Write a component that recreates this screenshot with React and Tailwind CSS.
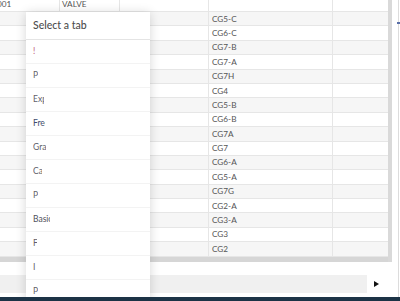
import React from "react";

const cg = ["CG5-C","CG6-C","CG7-B","CG7-A","CG7H","CG4","CG5-B","CG6-B","CG7A","CG7","CG6-A","CG5-A","CG7G","CG2-A","CG3-A","CG3","CG2"];

const items = [
  { t: "!", w: "w-[3px]", c: "text-[#c0607a]" },
  { t: "P", w: "w-[5px]", c: "text-[#5f5f6b]" },
  { t: "Exp", w: "w-[11px]", c: "text-[#5f5f6b]" },
  { t: "Free", w: "w-[12px]", c: "text-[#3f4d6e]" },
  { t: "Grap", w: "w-[13px]", c: "text-[#5f5f6b]" },
  { t: "Cal", w: "w-[9px]", c: "text-[#5f5f6b]" },
  { t: "P", w: "w-[5px]", c: "text-[#5f5f6b]" },
  { t: "Basic", w: "w-[17px]", c: "text-[#4f4f5b]" },
  { t: "F", w: "w-[4px]", c: "text-[#5f5f6b]" },
  { t: "I", w: "w-[3px]", c: "text-[#5f5f6b]" },
  { t: "P", w: "w-[5px]", c: "text-[#5f5f6b]" },
];

function Row({ a, b, c, gray }) {
  return (
    <div className={`flex h-[14.4px] shrink-0 border-b border-[#e6e6e6] text-[8.2px] text-[#555] ${gray ? "bg-[#f6f6f6]" : "bg-white"}`}>
      <div className="w-[60px] border-r border-[#e6e6e6] flex items-center overflow-hidden"><span className="-ml-[3px]">{a}</span></div>
      <div className="w-[60px] border-r border-[#e6e6e6] flex items-center pl-[2px]">{b}</div>
      <div className="w-[89px] border-r border-[#e6e6e6]" />
      <div className="w-[124px] border-r border-[#e6e6e6] flex items-center pl-[3px]">{c}</div>
      <div className="flex-1" />
    </div>
  );
}

export default function App() {
  return (
    <div className="w-[400px] h-[301px] bg-white overflow-hidden font-['Lato',sans-serif]">
      <div className="relative h-[297px] flex overflow-hidden">
        <div className="w-[392px] flex flex-col">
          <div className="flex h-[262px]">
            <div className="w-[388px] flex flex-col">
              <div className="flex-1 overflow-hidden">
                <div className="-mt-[2.4px] flex flex-col">
                  <Row a="001" b="VALVE" c="" gray={false} />
                  {cg.map((v, i) => (
                    <Row key={i} a="" b="" c={v} gray={i % 2 === 0} />
                  ))}
                </div>
              </div>
              <div className="h-[5px] bg-[#d6d6d6]" />
            </div>
            <div className="w-[4px] bg-[#d9d9d9]" />
          </div>
          <div className="h-[13px]" />
          <div className="flex h-[18px]">
            <div className="w-[367px] bg-[#f0f0f0]" />
            <div className="flex-1 flex items-center pl-[7px]">
              <svg width="5" height="6" viewBox="0 0 5 6"><path d="M0 0 L5 3 L0 6 Z" fill="#111" /></svg>
            </div>
          </div>
        </div>
        <div className="flex-1 flex justify-end pr-[1px]">
          <div className="w-[1px] bg-[#dcdcdc] relative">
            <div className="absolute top-[22px] -left-[1px] w-[3px] h-[2px] bg-[#5a6fa8]" />
          </div>
        </div>

        <div className="absolute left-[26px] top-[12px] w-[124px] h-[300px] bg-white shadow-[0_1px_10px_rgba(0,0,0,0.16)] flex flex-col">
          <div className="h-[28px] shrink-0 border-b border-[#e4e4e4] flex items-center pl-[7px] text-[10.5px] font-medium text-[#4d4d4d]">
            Select a tab
          </div>
          {items.map((it, i) => (
            <div key={i} className="h-[24px] shrink-0 border-b border-[#f3f3f3] flex items-center pl-[7px] text-[8.5px]">
              <span className={`${it.w} ${it.c} overflow-hidden whitespace-nowrap`}>{it.t}</span>
            </div>
          ))}
        </div>
      </div>
      <div className="h-[4px] bg-[#1c3346]" />
    </div>
  );
}
